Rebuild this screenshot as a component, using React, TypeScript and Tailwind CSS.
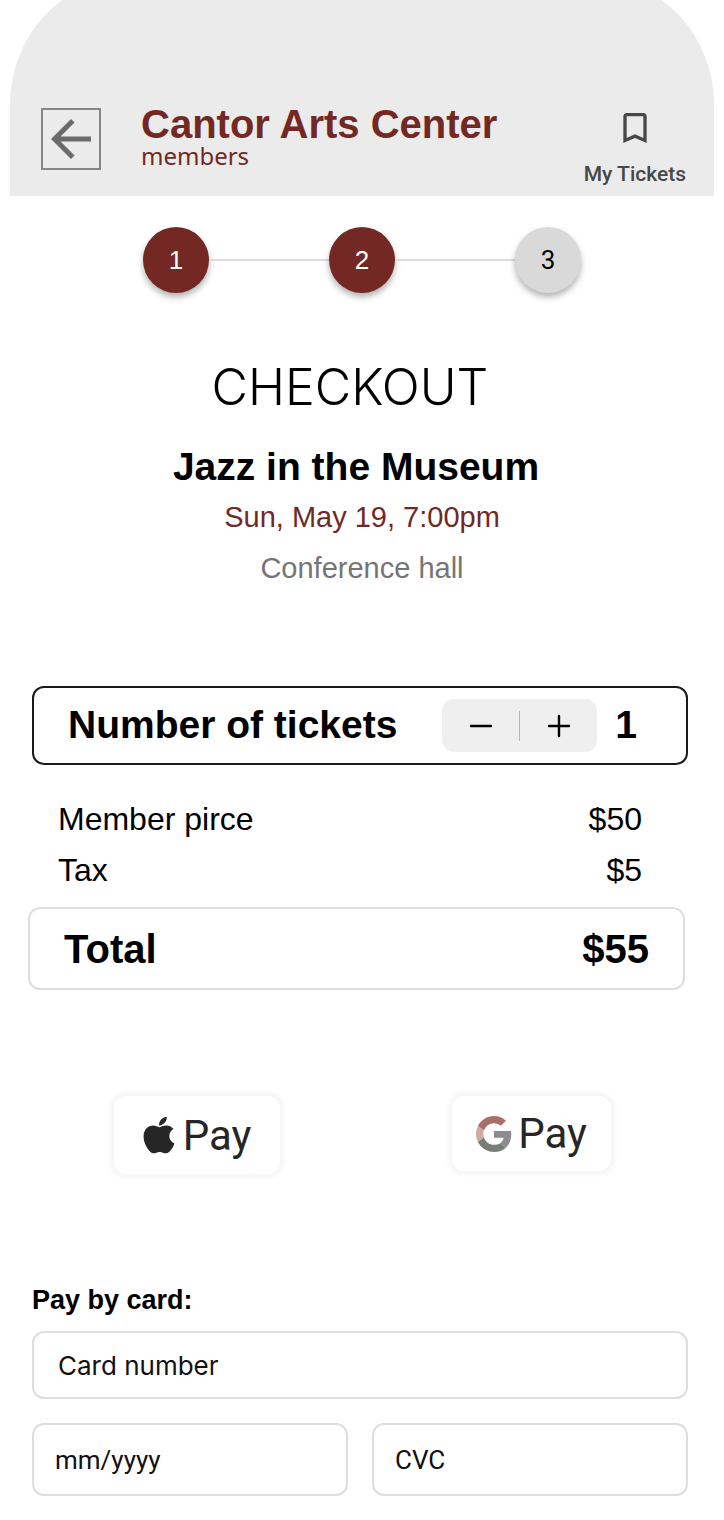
import { useState } from 'react';
import { MdArrowBack, MdBookmarkBorder } from 'react-icons/md';
import { FaApple } from 'react-icons/fa';

const TICKET_PRICE = 50;
const TICKET_TAX = 5;

function GoogleIcon() {
  return (
    <svg viewBox="0 0 48 48" className="h-9 w-9" aria-hidden="true">
      <path
        fill="#a9706b"
        d="M24 9.5c3.54 0 6.71 1.22 9.21 3.6l6.85-6.85C35.9 2.38 30.47 0 24 0 14.62 0 6.51 5.38 2.56 13.22l7.98 6.19C12.43 13.72 17.74 9.5 24 9.5z"
      />
      <path
        fill="#8c8c90"
        d="M46.98 24.55c0-1.57-.15-3.09-.38-4.55H24v9.02h12.94c-.58 2.96-2.26 5.48-4.78 7.18l7.73 6c4.51-4.18 7.09-10.36 7.09-17.65z"
      />
      <path
        fill="#cfaaa1"
        d="M10.53 28.59c-.48-1.45-.76-2.99-.76-4.59s.27-3.14.76-4.59l-7.98-6.19C.92 16.46 0 20.12 0 24c0 3.88.92 7.54 2.56 10.78l7.97-6.19z"
      />
      <path
        fill="#777e77"
        d="M24 48c6.48 0 11.93-2.13 15.89-5.81l-7.73-6c-2.15 1.45-4.92 2.3-8.16 2.3-6.26 0-11.57-4.22-13.47-9.91l-7.98 6.19C6.51 42.62 14.62 48 24 48z"
      />
    </svg>
  );
}

function Header() {
  return (
    <header className="-mt-5 mx-[10px] flex items-start rounded-t-[115px_125px] bg-[#ebebeb] pt-32 pr-7 pb-2 pl-[31px]">
      <button
        type="button"
        aria-label="Back"
        className="flex h-[62px] w-[60px] shrink-0 items-center justify-center border-2 border-[#868686] text-[#6b6b6b]"
      >
        <MdArrowBack className="h-[60px] w-[60px] shrink-0" />
      </button>
      <div className="ml-10 text-[#732823]">
        <p className="text-[40px] leading-8 font-bold">Cantor Arts Center</p>
        <p className="font-['Noto_Sans',sans-serif] text-2xl leading-8">members</p>
      </div>
      <a
        href="#tickets"
        className="ml-auto flex flex-col items-center gap-3 font-['Roboto',sans-serif] text-[21px] leading-7 font-medium text-[#474747]"
      >
        <MdBookmarkBorder className="h-10 w-10" />
        My Tickets
      </a>
    </header>
  );
}

function Steps() {
  const circle = 'flex h-[66px] w-[66px] items-center justify-center rounded-full text-[26px] shadow-[0_4px_6px_rgba(0,0,0,0.3)]';

  return (
    <ol className="mx-auto mt-[31px] flex w-full max-w-[438px] items-center">
      <li className={`${circle} bg-[#732823] text-white`}>1</li>
      <li aria-hidden="true" className="h-0.5 flex-1 bg-[#dcdcdc]"></li>
      <li aria-current="step" className={`${circle} bg-[#732823] text-white`}>2</li>
      <li aria-hidden="true" className="h-0.5 flex-1 bg-[#dcdcdc]"></li>
      <li className={`${circle} bg-[#d9d9d9] font-['Roboto',sans-serif] text-black`}>3</li>
    </ol>
  );
}

export default function App() {
  const [count, setCount] = useState(1);

  const inputClass = 'block w-full rounded-xl border-2 border-[#dedede] bg-white text-[26px] placeholder:text-[#111111] placeholder:opacity-100';
  const payClass = "flex items-center justify-center rounded-xl bg-white font-['Roboto',sans-serif] text-[42px] text-[#262626] shadow-[0_0_4px_4px_rgba(0,0,0,0.04)]";

  return (
    <div className="overflow-hidden bg-white font-['Liberation_Sans',Arial,sans-serif] text-black">
      <Header />

      <main>
        <Steps />

        <section className="text-center">
          <h1 className="mt-16 pr-6 font-['Inter',sans-serif] text-[50px] leading-[60px] font-light">CHECKOUT</h1>
          <h2 className="mt-6 pr-3 text-[39px] leading-[51px] font-bold">Jazz in the Museum</h2>
          <p className="text-[29px] leading-[51px] text-[#732823]">Sun, May 19, 7:00pm</p>
          <p className="text-[29px] leading-[51px] text-[#757575]">Conference hall</p>
        </section>

        <section className="mt-[92px] mr-9 ml-8 flex h-[79px] items-center rounded-xl border-2 border-[#1a1a1a] pr-[49px] pl-[34px]">
          <h2 className="text-[39px] font-bold">Number of tickets</h2>
          <div className="ml-auto flex h-[53px] w-[155px] items-center rounded-xl bg-[#efefef]">
            <button
              type="button"
              aria-label="Remove ticket"
              className="flex h-full flex-1 items-center justify-center"
              onClick={() => setCount(Math.max(1, count - 1))}
            >
              <svg viewBox="0 0 24 24" className="h-6 w-6" stroke="currentColor" strokeWidth="2.4" strokeLinecap="round">
                <path d="M2 12h20" />
              </svg>
            </button>
            <div className="h-[30px] w-px bg-[#b5b5b5]"></div>
            <button
              type="button"
              aria-label="Add ticket"
              className="flex h-full flex-1 items-center justify-center"
              onClick={() => setCount(count + 1)}
            >
              <svg viewBox="0 0 24 24" className="h-6 w-6" stroke="currentColor" strokeWidth="2.4" strokeLinecap="round">
                <path d="M2 12h20M12 2v20" />
              </svg>
            </button>
          </div>
          <output className="ml-[18px] text-[39px] font-bold">{count}</output>
        </section>

        <dl className="mt-[29px] mr-[39px] ml-7">
          <div className="flex justify-between pr-[43px] pl-[30px] text-[32px] leading-[51px]">
            <dt>Member pirce</dt>
            <dd>${TICKET_PRICE * count}</dd>
          </div>
          <div className="flex justify-between pr-[43px] pl-[30px] text-[32px] leading-[51px]">
            <dt>Tax</dt>
            <dd>${TICKET_TAX * count}</dd>
          </div>
          <div className="mt-[11px] flex h-[83px] items-center justify-between rounded-xl border-2 border-[#dedede] px-[34px] text-[40px] font-bold">
            <dt>Total</dt>
            <dd>${(TICKET_PRICE + TICKET_TAX) * count}</dd>
          </div>
        </dl>

        <div className="mt-[106px] flex items-start justify-between pr-[113px] pl-[114px]">
          <button type="button" aria-label="Apple Pay" className={`${payClass} h-[78px] w-[166px] gap-2`}>
            <FaApple className="h-[42px] w-8" />
            Pay
          </button>
          <button type="button" aria-label="Google Pay" className={`${payClass} h-[75px] w-[159px] gap-1.5`}>
            <GoogleIcon />
            Pay
          </button>
        </div>

        <form className="mt-[108px] mr-9 ml-8 pb-6" onSubmit={(e) => e.preventDefault()}>
          <h2 className="text-[27px] leading-9 font-bold">Pay by card:</h2>
          <input
            aria-label="Card number"
            placeholder="Card number"
            inputMode="numeric"
            className={`${inputClass} mt-[13px] h-[68px] px-6 font-['Inter',sans-serif]`}
          />
          <div className="mt-6 grid grid-cols-2 gap-6">
            <input
              aria-label="Expiry date"
              placeholder="mm/yyyy"
              className={`${inputClass} h-[73px] px-[21px] font-['Roboto',sans-serif]`}
            />
            <input
              aria-label="CVC"
              placeholder="CVC"
              inputMode="numeric"
              className={`${inputClass} h-[73px] px-[21px] font-['Roboto',sans-serif]`}
            />
          </div>
        </form>
      </main>
    </div>
  );
}
